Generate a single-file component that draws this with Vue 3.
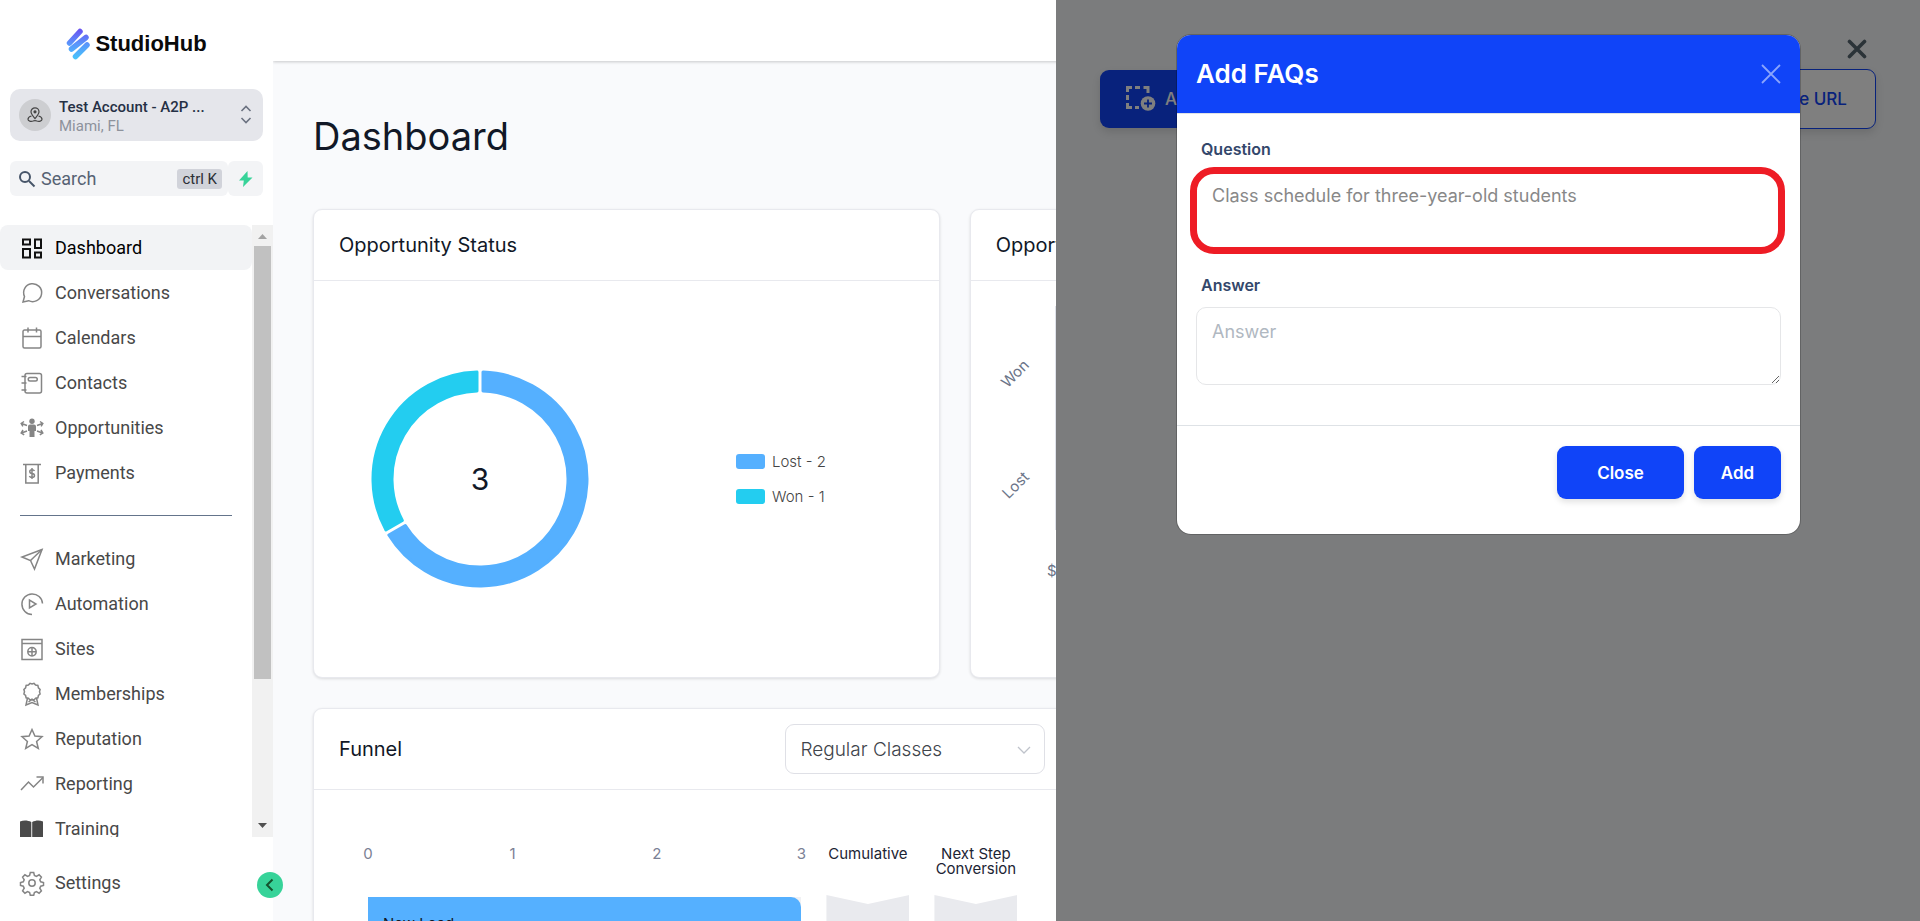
<script setup>
import { reactive, ref } from 'vue'

const mainItems = [
  {
    label: 'Dashboard',
    active: true,
    lines: ['M3 3.5h7v5H3z', 'M15 3.5h6V12h-6z', 'M3 13h7v8.5H3z', 'M15 16.5h6v5h-6z'],
  },
  { label: 'Conversations', lines: ['M3 21l1.5-5.5A9 9 0 1 1 8.6 19.7z'] },
  {
    label: 'Calendars',
    lines: ['M4.5 4h15a1.5 1.5 0 0 1 1.5 1.5v15a1.5 1.5 0 0 1-1.5 1.5h-15A1.5 1.5 0 0 1 3 20.5v-15A1.5 1.5 0 0 1 4.5 4z', 'M3 10.5h18M8 1.5v5M16.5 1.5v5'],
  },
  {
    label: 'Contacts',
    lines: [
      'M7 2.5h12.5a2 2 0 0 1 2 2V20a2 2 0 0 1-2 2H7a2 2 0 0 1-2-2V4.5a2 2 0 0 1 2-2z',
      'M10 6.5h5.5a1.5 1.5 0 0 1 0 3.5H10a1.5 1.5 0 0 1 0-3.5z',
      'M1.5 5.5h5M1.5 12h5M1.5 19h5',
    ],
  },
  {
    label: 'Opportunities',
    lines: ['M7 9.5L1.5 7.5M4 5.5L1.2 7.4l1.7 3M7 15l-5.5 2M3 14l-1.8 3 3 1.9M17 9.5l5.5-2M20 5.5l2.8 1.9-1.7 3M17 15l5.5 2M21 14l1.8 3-3 1.9'],
    solids: ['M12 2.5a2.7 2.7 0 1 1 0 5.4 2.7 2.7 0 0 1 0-5.4z', 'M10 8.5h4a2 2 0 0 1 2 2V15h-1.5v6h-5v-6H8v-4.5a2 2 0 0 1 2-2z'],
  },
  {
    label: 'Payments',
    lines: ['M3 3.5h18M5.8 3.5V22h12.4V3.5', 'M14.5 10c-.5-1-1.3-1.3-2.5-1.3-3 0-3 3.6 0 3.8 3.3.2 3.3 4 0 4-1.4 0-2.2-.5-2.6-1.5M12 7v11'],
  },
]

const moreItems = [
  { label: 'Marketing', lines: ['M22 2.5L2 10l8.5 3.5L14.5 22z', 'M22 2.5l-11.5 11'] },
  { label: 'Automation', lines: ['M22.5 11.5A10.3 10.3 0 1 0 12 22.5', 'M9.5 8v8l6.5-4z'] },
  {
    label: 'Sites',
    lines: ['M2 2.5h20V22.5H2z', 'M2 6.5h20', 'M12 10.5a4.2 4.2 0 1 1 0 8.4 4.2 4.2 0 0 1 0-8.4z', 'M8 14.7h8M12 10.5v8.4'],
  },
  {
    label: 'Memberships',
    lines: [
      'M12 2l2-.6 1.6 1.7 2.3.4.5 2.3 1.7 1.7-.6 2.2.6 2.3-1.7 1.5-.5 2.3-2.3.4L14 18l-2-.7-2 .7-1.6-1.8-2.3-.4-.5-2.3L3.9 12l.6-2.3-.6-2.2 1.7-1.7.5-2.3 2.3-.4L10 1.4z',
      'M7.5 16L6 23l6-2.5 6 2.5-1.5-7M8.5 20l3.500-2.5 3.5 2.5',
    ],
  },
  { label: 'Reputation', lines: ['M12 2.5l2.9 6.6 7.1.6-5.4 4.7 1.7 7.1-6.3-3.8-6.3 3.8 1.7-7.1L2 9.7l7.1-.6z'] },
  { label: 'Reporting', lines: ['M1 18l7.5-8 5 5L23 5.5', 'M16.5 5H23v6.5'] },
  { label: 'Training', dark: true, solids: ['M0 4.5c4-1.5 8-1 11.3.5v17C8 20.5 4 20 0 21.5z', 'M23 4.5c-4-1.5-7.5-1-10.8.5v17c3.3-1.5 6.8-2 10.8-.5z'] },
]

const settingsItem = {
  label: 'Settings',
  lines: [
    'M10.3 1.5h3.4l.7 3 2 .9 2.7-1.6 2.3 2.3-1.6 2.7.9 2 2.8.7v3l-2.8.7-.9 2 1.6 2.7-2.3 2.3-2.7-1.6-2 .9-.7 2.8h-3.4l-.7-2.8-2-.9-2.7 1.6-2.3-2.3 1.6-2.7-.9-2-2.8-.7v-3l2.8-.7.9-2-1.6-2.7 2.3-2.3 2.7 1.6 2-.9z',
    'M12 8.8a3.2 3.2 0 1 1 0 6.4 3.2 3.2 0 0 1 0-6.4z',
  ],
}

const ticks = [0, 1, 2, 3]
const funnel = ref('Regular Classes')
const modalOpen = ref(true)
const faq = reactive({
  question: 'Class schedule for three-year-old students',
  answer: '',
})

function closeModal() {
  modalOpen.value = false
}
</script>

<template>
  <div class="page">
    <aside class="sidebar">
      <div class="logo">
        <svg width="24" height="32" viewBox="0 0 24 32" aria-hidden="true">
          <defs>
            <linearGradient id="mark" x1="0" y1="0" x2="0" y2="32" gradientUnits="userSpaceOnUse">
              <stop offset="0" stop-color="#6a4cf0" />
              <stop offset="0.5" stop-color="#5a96fb" />
              <stop offset="1" stop-color="#45c8fb" />
            </linearGradient>
          </defs>
          <path d="M14 3.5L3.500 15M20 9.500L5.500 21M21 17L9.500 28.500" stroke="url(#mark)" stroke-width="5.500" stroke-linecap="round" />
        </svg>
        <span>StudioHub</span>
      </div>

      <button class="account" type="button">
        <span class="avatar">
          <svg width="16" height="16" viewBox="0 0 16 16" fill="none" stroke="#444" stroke-width="1.2">
            <path d="M8 11.5C5.5 8.5 4 7 4 4.8a4 4 0 0 1 8 0C12 7 10.5 8.5 8 11.5z" />
            <circle cx="8" cy="4.8" r="1" fill="#444" />
            <path d="M4.5 9C2.5 9.5 1 11 1 12.2c0 1.8 3 2.6 5 1.8 1.3-.6 2.7-.6 4 0 2 .8 5 0 5-1.8C15 11 13.5 9.5 11.5 9" />
          </svg>
        </span>
        <span class="account-text">
          <strong>Test Account - A2P ...</strong>
          <small>Miami, FL</small>
        </span>
        <svg width="12" height="20" viewBox="0 0 12 20" fill="none" stroke="#6b7280" stroke-width="1.6">
          <path d="M1.5 6L6 1.5 10.5 6M1.5 13L6 17.5 10.5 13" />
        </svg>
      </button>

      <div class="search-row">
        <label class="search">
          <svg width="18" height="18" viewBox="0 0 18 18" fill="none" stroke="#475569" stroke-width="2">
            <circle cx="7" cy="7" r="5" />
            <path d="M11 11l5.5 5.5" />
          </svg>
          <input type="text" placeholder="Search" aria-label="Search" />
          <kbd>ctrl K</kbd>
        </label>
        <button class="bolt" type="button" aria-label="Quick actions">
          <svg width="14" height="16" viewBox="0 0 14 16"><path d="M8.5 0L0 9.5h4.8L4 16l9.5-9.5H8.7z" fill="#37d399" /></svg>
        </button>
      </div>

      <div class="nav-area">
        <nav class="nav">
          <a v-for="item in mainItems" :key="item.label" href="#" class="nav-item" :class="{ active: item.active }">
            <svg class="nav-icon" viewBox="0 0 24 24">
              <path v-for="d in item.lines" :key="d" :d="d" class="line" />
              <path v-for="d in item.solids" :key="d" :d="d" class="solid" />
            </svg>
            {{ item.label }}
          </a>
          <hr />
          <a v-for="item in moreItems" :key="item.label" href="#" class="nav-item" :class="{ dark: item.dark }">
            <svg class="nav-icon" viewBox="0 0 24 24">
              <path v-for="d in item.lines" :key="d" :d="d" class="line" />
              <path v-for="d in item.solids" :key="d" :d="d" class="solid" />
            </svg>
            {{ item.label }}
          </a>
        </nav>
        <div class="scrollbar">
          <svg width="21" height="21" viewBox="0 0 21 21"><path d="M6 14l4.5-5 4.5 5z" fill="#a3a3a3" /></svg>
          <div class="track"><div class="thumb"></div></div>
          <svg width="21" height="21" viewBox="0 0 21 21"><path d="M6 7l4.5 5L15 7z" fill="#505050" /></svg>
        </div>
      </div>

      <div class="sidebar-foot">
        <a href="#" class="nav-item">
          <svg class="nav-icon" viewBox="0 0 24 24">
            <path v-for="d in settingsItem.lines" :key="d" :d="d" class="line" />
          </svg>
          {{ settingsItem.label }}
        </a>
      </div>
      <button class="collapse" type="button" aria-label="Collapse menu">
        <svg width="12" height="14" viewBox="0 0 12 14" fill="none" stroke="#14532d" stroke-width="2"><path d="M8.5 1.5L3 7l5.5 5.5" /></svg>
      </button>
    </aside>

    <main class="main">
      <header class="topbar"></header>
      <div class="content">
        <h1>Dashboard</h1>

        <div class="row">
          <section class="card">
            <div class="card-head"><h2>Opportunity Status</h2></div>
            <div class="status-body">
              <svg width="220" height="220" viewBox="-110 -110 220 220">
                <g stroke-width="3" stroke-linejoin="round">
                  <path d="M3-106.96A107 107 0 1 1-91.13 56.08L-74.67 46.57A88 88 0 1 0 3-87.95z" fill="#55b0ff" stroke="#55b0ff" />
                  <path d="M-94.13 50.88A107 107 0 0 1-3-106.96V-87.95A88 88 0 0 0-77.67 41.37z" fill="#23cdf0" stroke="#23cdf0" />
                </g>
                <text class="total" x="0" y="11" text-anchor="middle">3</text>
              </svg>
              <ul class="legend">
                <li><i class="swatch lost"></i>Lost - 2</li>
                <li><i class="swatch won"></i>Won - 1</li>
              </ul>
            </div>
          </section>

          <section class="card">
            <div class="card-head"><h2>Opportunity Value</h2></div>
            <svg class="value-chart" width="140" height="300" viewBox="0 0 140 300">
              <path d="M84.5 25v224" stroke="#dfe2ea" />
              <text transform="translate(59 85) rotate(-45)" text-anchor="end">Won</text>
              <text transform="translate(59 197) rotate(-45)" text-anchor="end">Lost</text>
              <text x="76" y="295">$0</text>
            </svg>
          </section>
        </div>

        <div class="row funnel-row">
          <section class="card">
            <div class="card-head tall">
              <h2>Funnel</h2>
              <div class="select">
                <select v-model="funnel" aria-label="Funnel">
                  <option>Regular Classes</option>
                </select>
                <svg width="14" height="8" viewBox="0 0 14 8" fill="none" stroke="#bfc3cb" stroke-width="1.3"><path d="M1 1l6 6 6-6" /></svg>
              </div>
            </div>
            <div class="funnel">
              <div class="ticks"><span v-for="t in ticks" :key="t">{{ t }}</span></div>
              <div class="col-name">Cumulative</div>
              <div class="col-name">Next Step Conversion</div>
              <div class="bar-bg"><div class="bar">New Lead</div></div>
              <div class="ribbon"></div>
              <div class="ribbon"></div>
            </div>
          </section>
        </div>
      </div>
    </main>

    <div class="drawer">
      <div class="drawer-head">
        <button class="drawer-close" type="button" aria-label="Close panel">
          <svg width="20" height="20" viewBox="0 0 20 20" stroke="#566670" stroke-width="3.6" stroke-linecap="round"><path d="M2.5 2.5l15 15M17.5 2.5l-15 15" /></svg>
        </button>
      </div>
      <div class="drawer-actions">
        <button class="solid-btn" type="button">
          <svg width="30" height="26" viewBox="0 0 30 26">
            <path d="M1.5 6V1.5H6M9 1.5h5M17.5 1.5H22V7M1.5 9v5M1.5 17v4.5H6M9 21.5h4" fill="none" stroke="#fff" stroke-width="3" />
            <circle cx="22" cy="17.5" r="7.3" fill="#fff" />
            <path d="M22 13.5v8M18 17.5h8" stroke="#1044f8" stroke-width="1.8" />
          </svg>
          Add FAQs
        </button>
        <button class="outline-btn" type="button">Youtube URL</button>
      </div>

      <div v-if="modalOpen" class="backdrop">
        <form class="modal" @submit.prevent="closeModal">
          <div class="modal-head">
            <h3>Add FAQs</h3>
            <button class="modal-x" type="button" aria-label="Close" @click="closeModal">
              <svg width="20" height="20" viewBox="0 0 20 20" stroke="#8ba5fc" stroke-width="1.8"><path d="M1 1l18 18M19 1L1 19" /></svg>
            </button>
          </div>
          <div class="modal-body">
            <div class="field marked">
              <label for="question">Question</label>
              <div class="box"><textarea id="question" v-model="faq.question"></textarea></div>
            </div>
            <div class="field">
              <label for="answer">Answer</label>
              <div class="box"><textarea id="answer" v-model="faq.answer" placeholder="Answer"></textarea></div>
            </div>
          </div>
          <div class="modal-foot">
            <button class="btn wide" type="button" @click="closeModal">Close</button>
            <button class="btn" type="submit">Add</button>
          </div>
        </form>
      </div>
    </div>
  </div>
</template>

<style>
body {
  margin: 0;
  overflow: hidden;
}
</style>

<style scoped>
* {
  box-sizing: border-box;
}

button {
  font: inherit;
  cursor: pointer;
}

.page {
  position: relative;
  display: flex;
  height: 100vh;
  overflow: hidden;
  background: #f9fafc;
  font-family: Inter, sans-serif;
}

.sidebar {
  position: relative;
  z-index: 1;
  display: flex;
  flex-direction: column;
  flex: none;
  width: 273px;
  background: #fff;
  font-family: Roboto, sans-serif;
}

.logo {
  display: flex;
  align-items: center;
  justify-content: center;
  gap: 5px;
  padding: 28px 0 29px;
  color: #0a0a0a;
  font: bold 22px/32px 'Liberation Sans', sans-serif;
}

.account {
  display: flex;
  align-items: center;
  gap: 8px;
  height: 52px;
  margin: 0 10px 20px;
  padding: 0 11px 0 9px;
  border: none;
  border-radius: 10px;
  background: #e5e6eb;
  text-align: left;
}

.avatar {
  display: flex;
  align-items: center;
  justify-content: center;
  width: 32px;
  height: 32px;
  border-radius: 50%;
  background: #cdced1;
}

.account-text {
  display: flex;
  flex: 1;
  flex-direction: column;
  padding-top: 4px;
  line-height: 19px;
}

.account-text strong {
  color: #253045;
  font-size: 15px;
  font-weight: 500;
}

.account-text small {
  color: #8d929c;
  font-size: 15px;
}

.search-row {
  display: flex;
  height: 35px;
  margin: 0 10px 29px;
}

.search {
  display: flex;
  flex: 1;
  align-items: center;
  gap: 5px;
  min-width: 0;
  padding: 0 6px 0 8px;
  border-radius: 6px;
  background: #f3f4f6;
}

.search svg {
  flex: none;
}

.search input {
  flex: 1;
  min-width: 0;
  padding: 0;
  border: none;
  background: none;
  font: 18px Roboto, sans-serif;
}

.search input::placeholder {
  color: #566273;
}

kbd {
  padding: 0 5px;
  border-radius: 3px;
  background: #d1d3da;
  color: #2b2f36;
  font: 15px/20px Roboto, sans-serif;
}

.bolt {
  display: flex;
  align-items: center;
  justify-content: center;
  width: 35px;
  border: none;
  border-radius: 6px;
  background: #f3f4f6;
}

.nav-area {
  display: flex;
  flex: 1;
  min-height: 0;
}

.nav {
  flex: 1;
  overflow: hidden;
}

.nav-item {
  display: flex;
  align-items: center;
  gap: 11px;
  height: 45px;
  padding-left: 20px;
  border-radius: 8px;
  color: #484848;
  font-size: 18px;
  text-decoration: none;
}

.nav-item.active {
  background: #f2f3f5;
  color: #000;
}

.nav-icon {
  width: 24px;
  height: 24px;
  color: #858585;
  overflow: visible;
}

.active .nav-icon {
  color: #111;
}

.dark .nav-icon {
  color: #4a4a4a;
}

.line {
  fill: none;
  stroke: currentColor;
  stroke-width: 1.5;
}

.active .line {
  stroke-width: 2;
}

.solid {
  fill: currentColor;
}

.nav hr {
  height: 1px;
  margin: 20px;
  border: none;
  background: #64748b;
}

.scrollbar {
  display: flex;
  flex-direction: column;
  width: 21px;
  background: #f1f1f1;
}

.track {
  flex: 1;
  padding: 0 2px;
}

.thumb {
  height: 76%;
  background: #c1c1c1;
}

.sidebar-foot {
  height: 84px;
  padding-top: 23px;
}

.collapse {
  position: absolute;
  right: -10px;
  bottom: 23px;
  display: flex;
  align-items: center;
  justify-content: center;
  width: 26px;
  height: 26px;
  padding: 0;
  border: none;
  border-radius: 50%;
  background: #37d399;
}

.main {
  flex: 1;
  min-width: 0;
}

.topbar {
  height: 61px;
  background: #fff;
  box-shadow: 0 1px 3px rgba(0, 0, 0, 0.2);
}

.content {
  padding: 51px 40px 0;
}

h1 {
  margin: 0 0 49px;
  color: #111827;
  font-size: 38px;
  font-weight: 400;
  line-height: 48px;
}

.row {
  display: grid;
  grid-template-columns: 40% 1fr;
  gap: 30px;
  margin-bottom: 30px;
}

.funnel-row {
  grid-template-columns: 48.4% 1fr;
}

.card {
  border: 1px solid #e8e9ee;
  border-radius: 9px;
  background: #fff;
  box-shadow: 0 1px 3px rgba(0, 0, 0, 0.12);
}

.card-head {
  display: flex;
  align-items: center;
  justify-content: space-between;
  height: 71px;
  padding: 0 25px;
  border-bottom: 1px solid #e8e9ee;
}

.card-head.tall {
  height: 81px;
}

h2 {
  margin: 0;
  color: #111827;
  font-size: 20px;
  font-weight: 400;
}

.status-body {
  display: flex;
  align-items: center;
  gap: 146px;
  height: 396px;
  padding-left: 56px;
}

.total {
  fill: #111827;
  font-size: 30px;
}

.legend {
  display: grid;
  gap: 15px;
  margin: 0;
  padding: 0;
  list-style: none;
  color: #444;
  font-size: 15px;
  font-weight: 300;
  line-height: 20px;
}

.legend li {
  display: flex;
  align-items: center;
  gap: 7px;
}

.swatch {
  width: 29px;
  height: 15px;
  border-radius: 3px;
}

.swatch.lost {
  background: #55b0ff;
}

.swatch.won {
  background: #23cdf0;
}

.value-chart text {
  fill: #6b7488;
  font-size: 15px;
}

.select {
  position: relative;
  width: 260px;
  height: 50px;
}

.select select {
  width: 100%;
  height: 100%;
  padding: 0 14px;
  border: 1px solid #dfe0e6;
  border-radius: 9px;
  appearance: none;
  background: #fff;
  color: #40444b;
  font: 300 19px Inter, sans-serif;
}

.select svg {
  position: absolute;
  top: 22px;
  right: 14px;
  pointer-events: none;
}

.funnel {
  display: grid;
  grid-template-columns: 1fr 83px 83px;
  column-gap: 25px;
  padding: 56px 53px 0 54px;
  font-size: 15px;
  line-height: 15px;
}

.ticks {
  display: flex;
  justify-content: space-between;
  margin: 0 -8px;
  color: #7b8195;
}

.ticks span {
  width: 16px;
  text-align: center;
}

.col-name {
  height: 49px;
  color: #1c2434;
  text-align: center;
}

.bar-bg {
  margin-top: 2px;
  background: #f0f1f4;
}

.bar {
  height: 60px;
  padding: 19px 15px;
  border-radius: 0 10px 10px 0;
  background: #55b0ff;
  color: #111827;
}

.ribbon {
  height: 60px;
  background: #e9eaee;
  clip-path: polygon(0 0, 50% 9px, 100% 0, 100% 100%, 0 100%);
}

.drawer {
  position: absolute;
  inset: 0 0 0 auto;
  z-index: 2;
  width: 45%;
  background: #f6f8fa;
}

.drawer-head {
  display: flex;
  justify-content: flex-end;
  padding: 39px 53px 0 0;
}

.drawer-close {
  display: flex;
  padding: 0;
  border: none;
  background: none;
}

.drawer-actions {
  display: flex;
  align-items: center;
  justify-content: space-between;
  padding: 10px 44px 0;
  font-size: 17px;
  font-weight: 500;
}

.solid-btn,
.outline-btn {
  display: flex;
  align-items: center;
  gap: 9px;
  height: 58px;
  padding: 0 26px;
  border: none;
  border-radius: 9px;
  background: #1044f8;
  box-shadow: 0 4px 8px rgba(0, 0, 0, 0.12);
  color: #fff;
}

.outline-btn {
  height: 60px;
  padding: 0 28px;
  border: 1px solid #1044f8;
  background: #fff;
  color: #1044f8;
}

.backdrop {
  position: absolute;
  inset: 0;
  padding: 34px 119px 34px 120px;
  background: rgba(0, 0, 0, 0.5);
}

.modal {
  overflow: hidden;
  border: 1px solid rgba(0, 0, 0, 0.2);
  border-radius: 15px;
  background: #fff;
  background-clip: padding-box;
}

.modal-head {
  display: flex;
  align-items: center;
  justify-content: space-between;
  height: 79px;
  padding: 0 19px;
  border-bottom: 1px solid #dee2e6;
  background: #1044f8;
  background-clip: padding-box;
}

h3 {
  margin: 0;
  color: #fff;
  font-size: 26px;
  font-weight: 600;
  line-height: 28px;
}

.modal-x {
  display: flex;
  padding: 0;
  border: none;
  background: none;
}

.modal-body {
  display: grid;
  gap: 24px;
  padding: 23px 19px 40px;
}

.field label {
  display: block;
  height: 34px;
  padding-left: 5px;
  color: #33476b;
  font-size: 16px;
  font-weight: 600;
  line-height: 24px;
}

.box {
  position: relative;
  display: flex;
}

.box textarea {
  width: 100%;
  height: 78px;
  padding: 12px 15px;
  border: 1px solid #e5e6e8;
  border-radius: 10px;
  color: #888;
  font: 18px/24px Inter, sans-serif;
}

.box textarea::placeholder {
  color: #b0b8c1;
}

.marked .box::after {
  position: absolute;
  inset: -4px -4px -5px -6px;
  border: 7px solid #ee1c25;
  border-radius: 24px;
  content: '';
  pointer-events: none;
}

.modal-foot {
  display: flex;
  justify-content: flex-end;
  gap: 10px;
  padding: 20px 19px 35px;
  border-top: 1px solid #dee2e6;
}

.btn {
  width: 87px;
  height: 53px;
  border: none;
  border-radius: 9px;
  background: #1044f8;
  box-shadow: 0 3px 6px rgba(0, 0, 0, 0.12);
  color: #fff;
  font-size: 17px;
  font-weight: 600;
}

.btn.wide {
  width: 127px;
}
</style>
